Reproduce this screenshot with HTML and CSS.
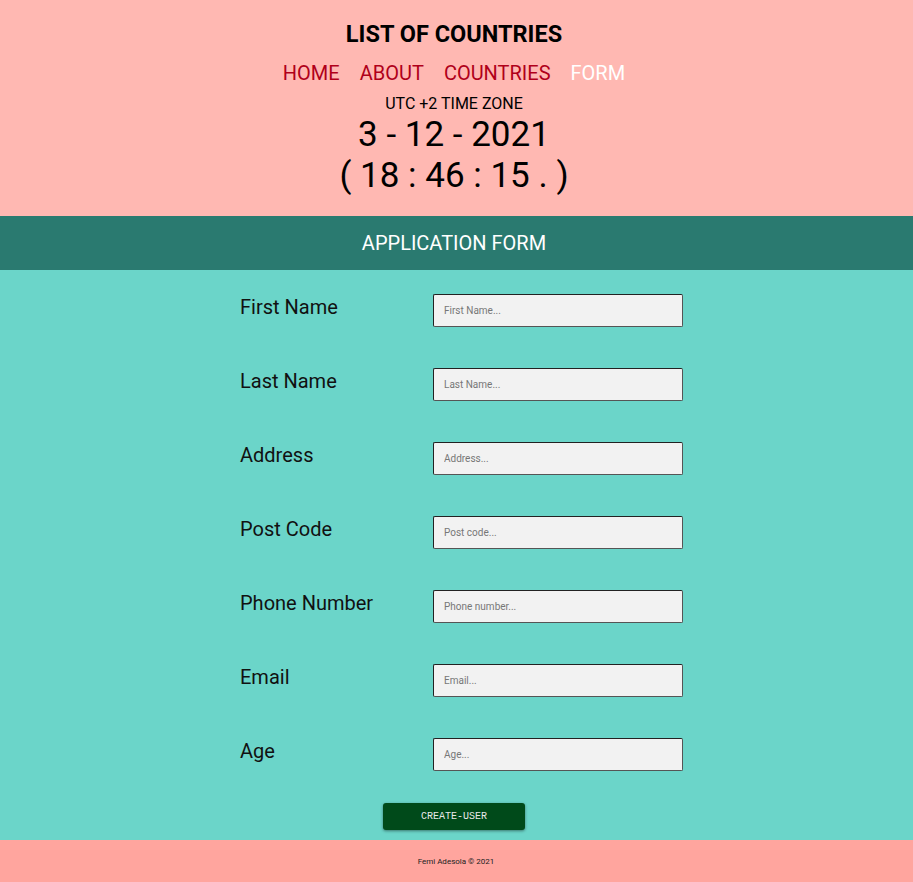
FILE: index.html
```html
<!DOCTYPE html>
<html lang="en">
<head>
<meta charset="utf-8">
<title>List of Countries - Form</title>
<link rel="stylesheet" href="styles.css">
</head>
<body>
<header class="site-header">
  <h1 class="site-title">LIST OF COUNTRIES</h1>
  <nav class="nav">
    <a class="nav-link" href="#">HOME</a>
    <a class="nav-link" href="#">ABOUT</a>
    <a class="nav-link" href="#">COUNTRIES</a>
    <a class="nav-link nav-link-active" href="#">FORM</a>
  </nav>
  <div class="tz">UTC +2 TIME ZONE</div>
  <div class="clock">3 - 12 - 2021</div>
  <div class="clock">( 18 : 46 : 15 . )</div>
</header>
<div class="form-band">APPLICATION FORM</div>
<main class="form-area">
  <form class="app-form">
    <div class="row"><label class="label">First Name</label><input class="field" type="text" placeholder="First Name..."></div>
    <div class="row"><label class="label">Last Name</label><input class="field" type="text" placeholder="Last Name..."></div>
    <div class="row"><label class="label">Address</label><input class="field" type="text" placeholder="Address..."></div>
    <div class="row"><label class="label">Post Code</label><input class="field" type="text" placeholder="Post code..."></div>
    <div class="row"><label class="label">Phone Number</label><input class="field" type="text" placeholder="Phone number..."></div>
    <div class="row"><label class="label">Email</label><input class="field" type="text" placeholder="Email..."></div>
    <div class="row"><label class="label">Age</label><input class="field" type="text" placeholder="Age..."></div>
    <div class="actions"><button class="btn" type="button">CREATE-USER</button></div>
  </form>
</main>
<footer class="site-footer">Femi Adesola © 2021</footer>
</body>
</html>
```
FILE: styles.css
```css
* { box-sizing: border-box; }
html, body { margin: 0; padding: 0; }
body {
  font-family: Roboto, "Liberation Sans", Arial, sans-serif;
  color: #000;
  background: #6bd5c9;
}
.site-header {
  background: #ffb8b2;
  padding: 20px 5px 20px 0;
  text-align: center;
}
.site-title {
  margin: 0;
  font-size: 23.5px;
  line-height: 28px;
  font-weight: 700;
}
.nav {
  margin-top: 13px;
  display: flex;
  justify-content: center;
  gap: 20px;
  font-size: 20px;
  line-height: 24px;
}
.nav-link {
  color: #b0001a;
  text-decoration: none;
}
.nav-link-active { color: #fff; }
.tz {
  margin-top: 9px;
  font-size: 16px;
  line-height: 20px;
}
.clock {
  font-size: 35px;
  line-height: 41px;
}
.form-band {
  background: #2a7a70;
  color: #fff;
  height: 54px;
  padding-right: 5px;
  display: flex;
  align-items: center;
  justify-content: center;
  font-size: 20px;
}
.form-area {
  padding: 24px 0 10px;
}
.app-form {
  width: 443px;
  margin: 0 0 0 240px;
  display: flex;
  flex-direction: column;
  gap: 41px;
}
.row {
  display: flex;
  align-items: flex-start;
}
.label {
  width: 193px;
  font-size: 20px;
  line-height: 24px;
  margin-top: 1px;
  color: #111;
}
.field {
  width: 250px;
  height: 33px;
  background: #f2f2f2;
  border: 1px solid #555;
  border-top-color: #222;
  border-left-color: #222;
  border-radius: 2px;
  padding: 0 10px;
  font-family: Roboto, "Liberation Sans", Arial, sans-serif;
  font-size: 10px;
  color: #222;
}
.field::placeholder { color: #777; }
.actions {
  margin-top: -9px;
  padding-left: 143px;
  display: flex;
}
.btn {
  width: 142px;
  height: 27px;
  padding: 0;
  background: #004a1a;
  color: #e8e8e8;
  border: none;
  border-radius: 3px;
  box-shadow: 0 1px 3px rgba(0,0,0,0.45);
  font: 400 10px/1 "Courier New", Courier, "Nimbus Mono PS", "Nimbus Mono L", FreeMono, "Liberation Mono", monospace;
  cursor: pointer;
}
.site-footer {
  background: #ffa59e;
  height: 42px;
  padding-right: 1px;
  display: flex;
  align-items: center;
  justify-content: center;
  font-size: 8px;
  color: #222;
}
```
